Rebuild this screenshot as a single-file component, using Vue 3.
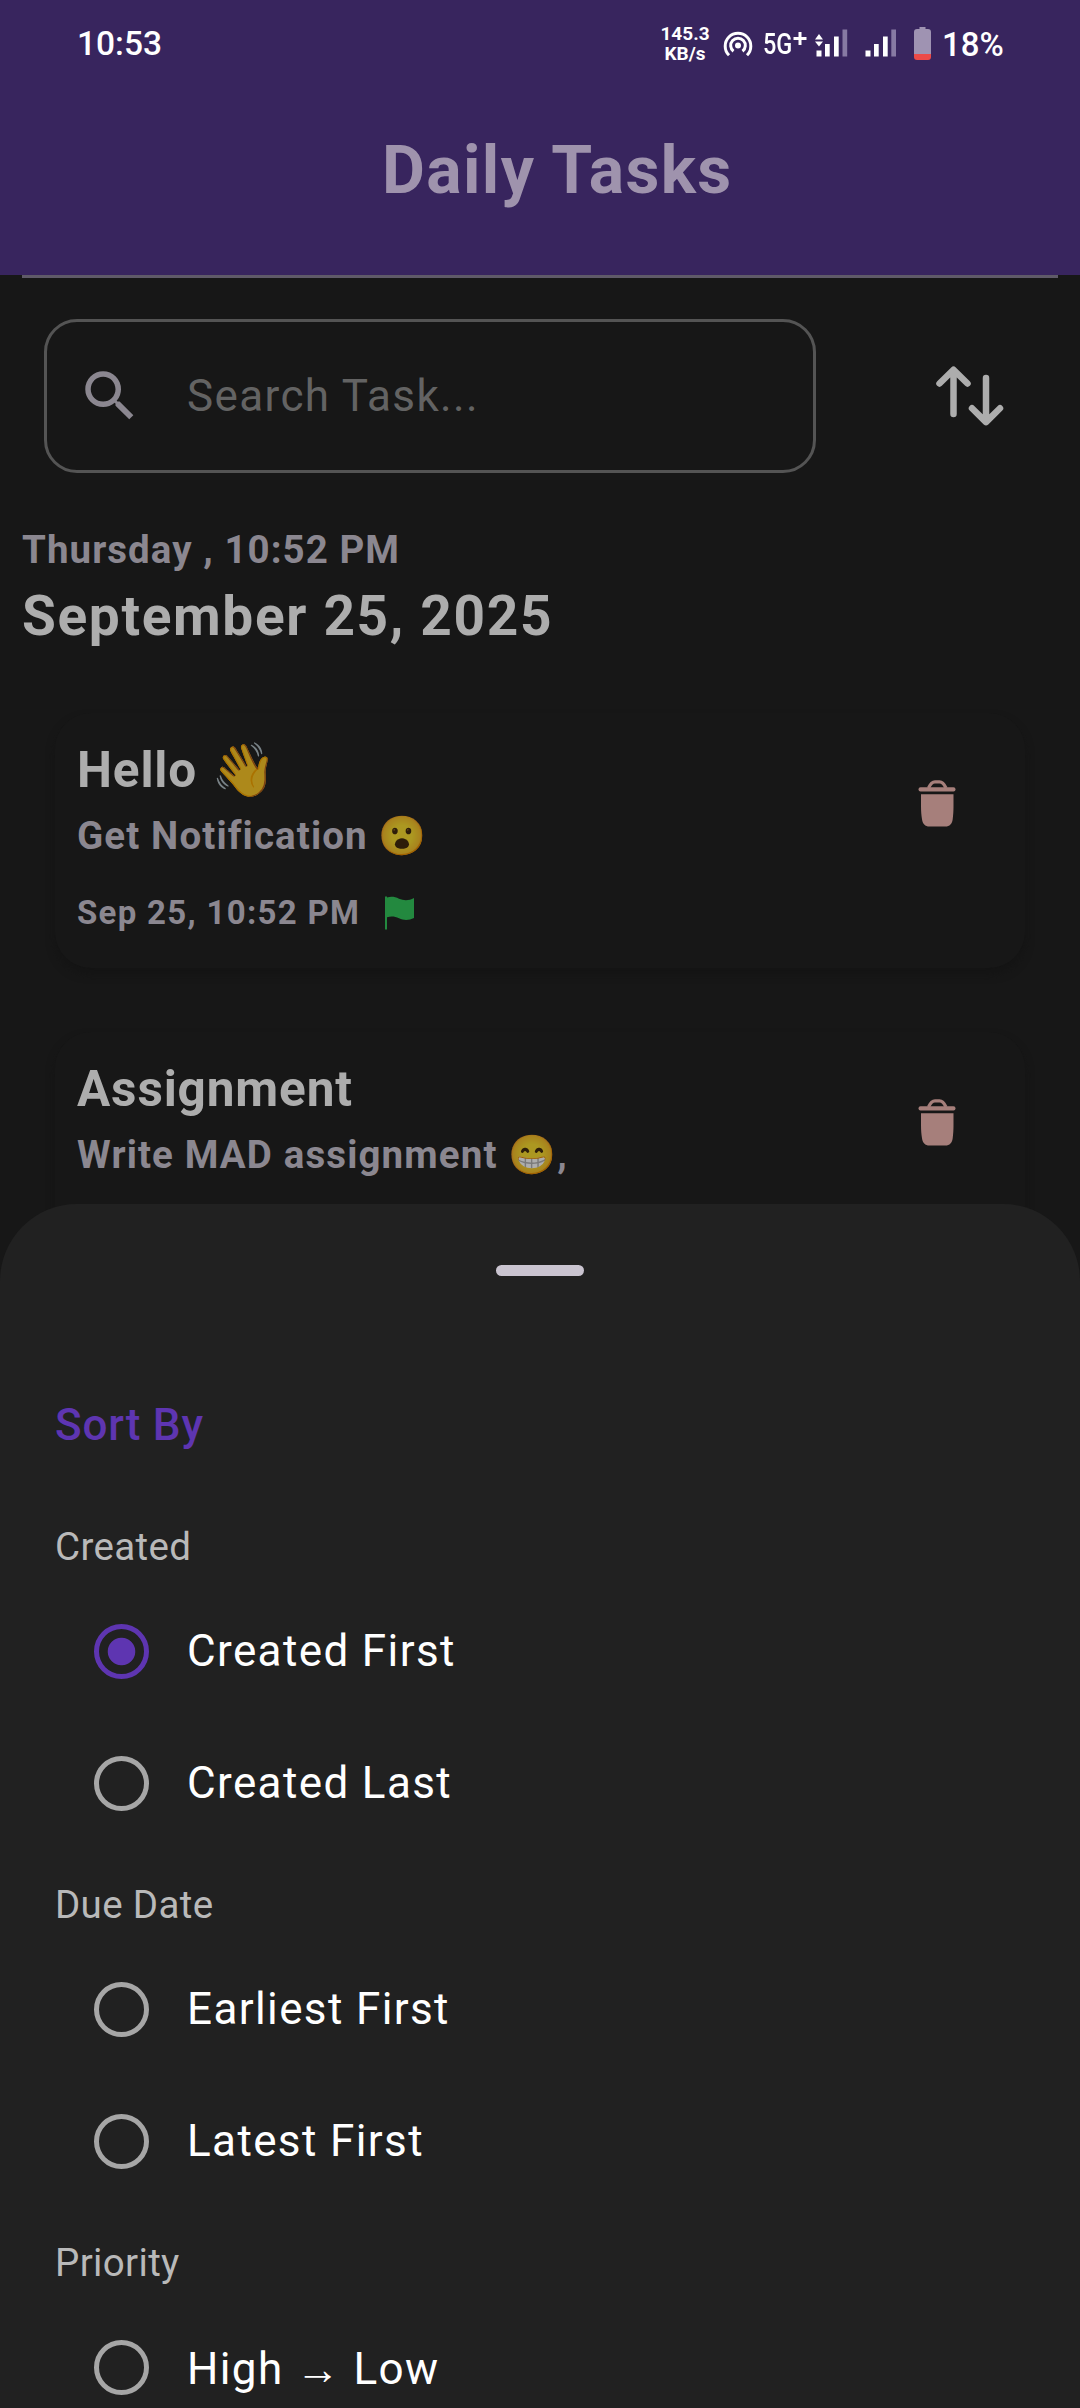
<script setup>
const tasks = [
  { title: 'Hello', titleEmoji: '👋', note: 'Get Notification', noteEmoji: '😮', tail: '', due: 'Sep 25, 10:52 PM' },
  { title: 'Assignment', titleEmoji: '', note: 'Write MAD assignment', noteEmoji: '😁', tail: ',', due: '' }
]
const groups = [
  { label: 'Created', options: ['Created First', 'Created Last'] },
  { label: 'Due Date', options: ['Earliest First', 'Latest First'] },
  { label: 'Priority', options: ['High → Low'] }
]
const selected = 'Created First'
</script>

<template>
  <div class="screen">
    <header class="header">
      <div class="status">
        <span class="clock">10:53</span>
        <div class="rate"><span>145.3</span><span>KB/s</span></div>
        <svg class="hotspot" width="30" height="28" viewBox="0 0 30 28" fill="none" stroke="#fff" stroke-width="3">
          <circle cx="15" cy="15.5" r="3" fill="#fff" stroke="none" />
          <path d="M10.5 21.2a7.3 7.3 0 1 1 9 0" />
          <path d="M6 25.2a12.8 12.8 0 1 1 18 0" />
        </svg>
        <span class="net">5G</span>
        <svg class="signal" width="104" height="34" viewBox="0 0 104 34" fill="#fff">
          <path d="M6.5 5h3v5h5v3h-5v5h-3v-5h-5v-3h5z" />
          <path d="M23 12.5l4-5.5 4 5.5zM23 14.5h8l-4 5z" />
          <path d="M24.5 23.500h5v6h-5zM33 17h4.700v12.500H33zM42 9.500h4.700v20H42zM73.500 23.500h5v6h-5zM82 17h4.700v12.500H82zM91 9.500h4.700v20H91z" />
          <path d="M50.500 2.500h4.700v27h-4.700zM99.300 2.500h4.700v27h-4.700z" fill="#877aa3" />
        </svg>
        <svg class="battery" width="17" height="33" viewBox="0 0 17 33">
          <path d="M5.500 0h6v2H14a3 3 0 0 1 3 3v22H0V5a3 3 0 0 1 3-3h2.500z" fill="#9f93b2" />
          <path d="M0 27h17v3a3 3 0 0 1-3 3H3a3 3 0 0 1-3-3z" fill="#ec4a48" />
        </svg>
        <span class="level">18%</span>
      </div>
      <h1 class="title">Daily Tasks</h1>
    </header>
    <div class="rule"></div>

    <div class="tools">
      <div class="search">
        <svg width="66" height="66" viewBox="0 0 24 24" fill="#8b8790">
          <path d="M15.500 14h-.79l-.28-.27A6.471 6.471 0 0 0 16 9.500 6.500 6.500 0 1 0 9.500 16c1.610 0 3.090-.59 4.230-1.570l.27.28v.79l5 4.990L20.490 19l-4.990-5zm-6 0C7.010 14 5 11.990 5 9.500S7.010 5 9.500 5 14 7.010 14 9.500 11.990 14 9.500 14z" />
        </svg>
        <span>Search Task...</span>
      </div>
      <svg class="sort" width="68" height="60" viewBox="0 0 68 60" fill="none" stroke="#adadad" stroke-width="6.500" stroke-linecap="round" stroke-linejoin="round">
        <path d="M17.500 48V4M3.500 17.500l14-13.800 14 13.800M50 12v43.500M36 42.300l14 13.800 14-13.800" />
      </svg>
    </div>

    <div class="dates">
      <p class="now">Thursday , 10:52 PM</p>
      <p class="day">September 25, 2025</p>
    </div>

    <section class="list">
      <article v-for="t in tasks" :key="t.title" class="card">
        <div class="info">
          <h2>{{ t.title }} <span class="emoji">{{ t.titleEmoji }}</span></h2>
          <p class="note">{{ t.note }} <span class="emoji">{{ t.noteEmoji }}</span>{{ t.tail }}</p>
          <p v-if="t.due" class="due">
            <span>{{ t.due }}</span>
            <svg width="30" height="34" viewBox="0 0 30 34" fill="#23893f">
              <path d="M0 .5h2v1c4-1.200 8-.8 12 1.300 5 2 10 2 15-.8V22c-5 2.500-10 2.600-15 .3-4-2-8-2.300-12-1V33.500H0z" />
            </svg>
          </p>
        </div>
        <svg class="trash" width="38" height="47" viewBox="0 0 38 47" fill="#a67f7b">
          <path d="M10.500 8C12.500 3.500 14 1.800 17 1.800h4.500c3 0 4.500 1.700 6.500 6.200" fill="none" stroke="#a67f7b" stroke-width="3.200" />
          <rect x=".5" y="7.200" width="37" height="4.400" rx="2" />
          <path d="M3 14.200h32.500v12c0 5-.3 9-.8 13-.5 4.500-3 7.300-7.500 7.300H11.500c-4.500 0-7-2.800-7.500-7.300-.6-4-1-8-1-13z" />
        </svg>
      </article>
    </section>

    <section class="sheet">
      <div class="handle"></div>
      <h3>Sort By</h3>
      <div v-for="g in groups" :key="g.label" class="group">
        <p class="label">{{ g.label }}</p>
        <div v-for="o in g.options" :key="o" class="option">
          <i class="radio" :class="{ on: o === selected }"></i>
          <span :class="{ arrowed: o.includes('→') }">{{ o }}</span>
        </div>
      </div>
    </section>
  </div>
</template>

<style>
body { margin: 0; background: #171717; }
</style>

<style scoped>
.screen {
  position: relative;
  width: 1080px;
  height: 2408px;
  overflow: hidden;
  background: #171717;
  font-family: Roboto, "Liberation Sans", sans-serif;
  letter-spacing: 1.375px;
}
h1, h2, h3, p { margin: 0; white-space: nowrap; }
svg { display: block; flex: none; }
.header { height: 275px; background: #38255e; }
.status {
  display: flex;
  align-items: center;
  height: 87px;
  padding-left: 77px;
  color: #fff;
  font-weight: 500;
  letter-spacing: 0;
}
.clock { width: 583px; font-size: 33.5px; }
.rate {
  width: 50px;
  font-size: 19px;
  font-weight: 700;
  line-height: 20px;
  display: flex;
  flex-direction: column;
  align-items: center;
}
.hotspot { margin-left: 13px; }
.net {
  width: 29px;
  margin-left: 10px;
  font-size: 29px;
  font-weight: 500;
  transform: scaleX(.81);
  transform-origin: left;
}
.battery { margin-left: 18px; }
.level { margin-left: 11px; padding-top: 2px; font-size: 33px; }
.title {
  padding: 44px 0 0 382px;
  font-size: 66px;
  line-height: 80px;
  font-weight: 700;
  color: #9f93ad;
}
.rule { height: 3px; margin: 0 22px; background: #5f5a68; }
.tools {
  display: flex;
  align-items: center;
  margin-top: 41px;
  padding-left: 44px;
}
.search {
  box-sizing: border-box;
  width: 772px;
  height: 154px;
  display: flex;
  align-items: center;
  gap: 44px;
  padding-left: 30px;
  border: 3px solid #545454;
  border-radius: 33px;
  font-size: 44px;
  color: #636363;
}
.sort { margin-left: 120px; }
.dates { padding: 44px 22px 0; font-weight: 700; line-height: 66px; }
.now { font-size: 38.5px; letter-spacing: 1.05px; color: #8b8790; }
.day { font-size: 55px; letter-spacing: 1.65px; color: #adadad; }
.list { display: flex; flex-direction: column; gap: 64px; padding: 64px 55px 0; }
.card {
  box-sizing: border-box;
  height: 255px;
  padding: 24px 69px 0 22px;
  display: flex;
  justify-content: space-between;
  border-radius: 36px;
  background: #171717;
  box-shadow: 0 6px 8px #141414;
  font-weight: 700;
}
h2 { font-size: 49.5px; line-height: 66px; letter-spacing: .85px; color: #adadad; }
h2 .emoji { margin-left: 1.5px; font-size: 52.5px; vertical-align: -1px; }
.note { font-size: 38.5px; line-height: 66px; letter-spacing: 1.12px; color: #8b8790; }
.due {
  display: flex;
  align-items: center;
  gap: 25px;
  margin-top: 11px;
  font-size: 33px;
  line-height: 66px;
  letter-spacing: 1.3px;
  color: #8b8790;
}
.emoji {
  font-family: "Noto Color Emoji", Roboto, sans-serif;
  font-weight: 400;
  line-height: 1;
  filter: brightness(.68);
}
.trash { margin-top: 43px; }
.sheet {
  position: absolute;
  left: 0;
  top: 1204px;
  width: 1080px;
  height: 1204px;
  overflow: hidden;
  background: #212121;
  border-radius: 77px 77px 0 0;
}
.handle { width: 88px; height: 11px; margin: 61px auto 0; border-radius: 5.5px; background: #cac4d0; }
h3 {
  margin: 116px 0 0 55px;
  font-size: 44px;
  line-height: 66px;
  letter-spacing: .8px;
  font-weight: 500;
  color: #5e35b1;
}
.group { height: 358px; }
.label {
  padding: 61px 0 11px 55px;
  font-size: 38.5px;
  line-height: 55px;
  letter-spacing: .35px;
  color: #b9b9b9;
}
.option {
  display: flex;
  align-items: center;
  gap: 38px;
  height: 132px;
  padding-left: 94px;
  font-size: 44px;
  color: #fff;
}
.arrowed { padding-top: 3px; }
.radio {
  box-sizing: border-box;
  width: 55px;
  height: 55px;
  border: 5.5px solid #a6a6a6;
  border-radius: 50%;
}
.radio.on {
  border-color: #5e35b1;
  background: radial-gradient(circle, #5e35b1 13.3px, transparent 14.2px);
}
</style>
